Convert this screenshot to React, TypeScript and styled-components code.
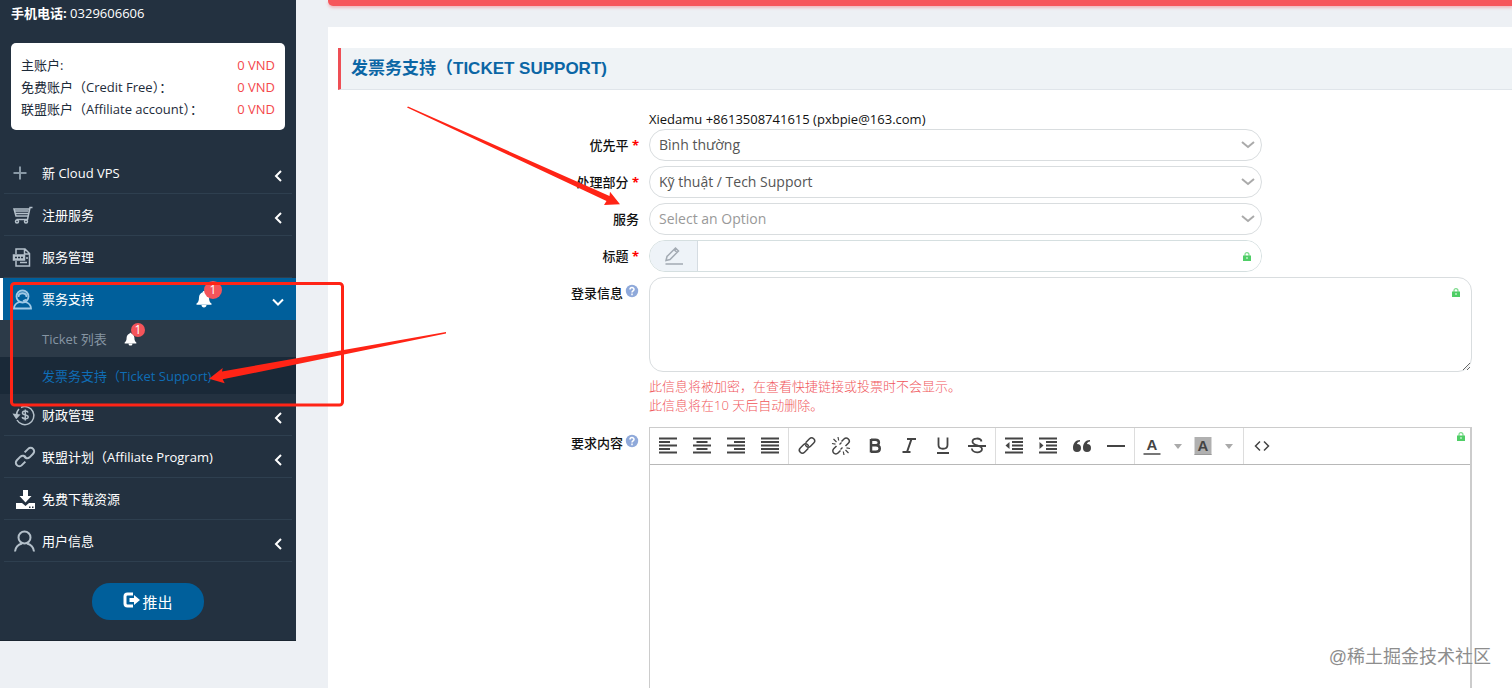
import React from "react";
import styled, { createGlobalStyle, css } from "styled-components";

const GlobalStyle = createGlobalStyle`
  *, *::before, *::after { box-sizing: border-box; }
  html, body { margin: 0; padding: 0; }
  body {
    background: #edf0f4;
    color: #111;
    font-family: "Open Sans", "Noto Sans CJK SC", sans-serif;
    font-size: 13px;
    line-height: 18px;
  }
  button, input, select, textarea { font: inherit; }
`;

const Page = styled.div`
  position: relative;
  display: flex;
  align-items: flex-start;
  min-height: 100vh;
  overflow: hidden;
`;

/* ---------- sidebar ---------- */

const Sidebar = styled.aside`
  flex: 0 0 296px;
  padding-bottom: 20px;
  background: #233140;
  border-bottom: 1px solid #1a2530;
  color: #fff;
`;

const Phone = styled.p`
  margin: 0;
  padding: 3px 11px 0;
  line-height: 20px;
`;

const Balances = styled.dl`
  margin: 20px 11px 22px;
  padding: 11px 10px 10px;
  border-radius: 5px;
  background: #fff;
  color: #1d2b3a;
  line-height: 22px;
`;

const BalanceRow = styled.div`
  display: flex;
  justify-content: space-between;
`;

const Amount = styled.dd`
  margin: 0;
  color: #f4474b;
`;

const Nav = styled.ul`
  margin: 0;
  padding: 0;
  list-style: none;
`;

const NavLink = styled.a<{ $active?: boolean }>`
  display: grid;
  grid-template-columns: 30px 1fr auto 20px;
  align-items: center;
  height: 42px;
  padding: 0 8px 0 12px;
  color: #fff;
  text-decoration: none;
  ${(p) =>
    p.$active
      ? css`
          padding-left: 9px;
          border-left: 3px solid #fff;
          background: #005f9b;
        `
      : css`
          background: linear-gradient(#2e3f4f, #2e3f4f) center bottom / calc(100% - 8px) 1px no-repeat;
        `}
`;

const Chevron = styled.svg`
  width: 14px;
  height: 14px;
  margin-top: 5px;
  justify-self: center;
  fill: none;
  stroke: #fff;
  stroke-width: 2;
`;

const SubLink = styled.a<{ $current?: boolean }>`
  display: flex;
  align-items: center;
  gap: 17px;
  height: 37px;
  padding-left: 42px;
  background: ${(p) => (p.$current ? "#1a2938" : "#2c3a48")};
  color: ${(p) => (p.$current ? "#0f6db5" : "#8695a3")};
  text-decoration: none;
`;

const Alert = styled.span<{ $large?: boolean }>`
  position: relative;
  display: flex;
  margin-right: ${(p) => (p.$large ? "56px" : "0")};
  svg { width: ${(p) => (p.$large ? "16px" : "13px")}; height: ${(p) => (p.$large ? "18px" : "14px")}; fill: #fff; }
`;

const Count = styled.span<{ $large?: boolean }>`
  position: absolute;
  left: ${(p) => (p.$large ? "8px" : "7px")};
  top: -9px;
  width: ${(p) => (p.$large ? "18px" : "14px")};
  height: ${(p) => (p.$large ? "18px" : "14px")};
  border-radius: 50%;
  background: #f4545a;
  color: #fff;
  font-size: 12px;
  line-height: ${(p) => (p.$large ? "18px" : "14px")};
  text-align: center;
`;

const MenuIcon = styled.svg`
  width: 24px;
  height: 24px;
  fill: none;
  stroke: #b4c0ca;
  stroke-width: 2;
`;

const Logout = styled.button`
  display: flex;
  align-items: center;
  justify-content: center;
  gap: 2px;
  width: 112px;
  height: 37px;
  margin: 21px auto 0;
  border: 0;
  border-radius: 18px;
  background: #005f9b;
  color: #fff;
  font-size: 15px;
  svg { width: 17px; height: 16px; margin-bottom: 4px; }
`;

/* ---------- main area ---------- */

const Main = styled.main`
  display: flex;
  flex: 1 1 0;
  flex-direction: column;
  min-width: 0;
  min-height: 100vh;
  padding-left: 32px;
`;

const NoticeBar = styled.div`
  height: 6px;
  margin-bottom: 21px;
  border-radius: 0 0 0 5px;
  background: #f6565b;
  box-shadow: 0 2px 3px rgba(246, 86, 91, 0.35);
`;

const Panel = styled.section`
  display: flex;
  flex: 1;
  flex-direction: column;
  padding: 21px 0 0 10px;
  background: #fff;
`;

const Title = styled.h1`
  margin: 0 0 20px;
  padding: 0 10px;
  border-bottom: 1px solid #e0e5ea;
  border-left: 3px solid #ee4f55;
  background: #eff3f6;
  color: #0b66a5;
  font-family: "Liberation Sans", "Noto Sans CJK SC", sans-serif;
  font-size: 17px;
  font-weight: 700;
  line-height: 41px;
`;

const Form = styled.form`
  display: flex;
  flex: 1;
  flex-direction: column;
  gap: 5px;
  padding-right: 40px;
`;

const Row = styled.div<{ $fill?: boolean }>`
  display: grid;
  grid-template-columns: 301px minmax(0, 1fr);
  column-gap: 10px;
  flex: ${(p) => (p.$fill ? "1" : "none")};
`;

const Customer = styled.p`
  grid-column: 2;
  margin: 0 0 -4px;
`;

const Label = styled.label`
  display: flex;
  justify-content: flex-end;
  padding-top: 7px;
  font-weight: 500;
  white-space: pre;
`;

const Required = styled.span`
  color: #f00;
  font-weight: 700;
`;

const Help = styled.svg`
  width: 14px;
  height: 14px;
  margin-left: 2px;
`;

const Field = styled.div<{ $wide?: boolean }>`
  position: relative;
  display: flex;
  flex-direction: column;
  width: 100%;
  max-width: ${(p) => (p.$wide ? "none" : "613px")};
`;

const Select = styled.select<{ $empty?: boolean }>`
  width: 100%;
  height: 32px;
  padding: 0 36px 0 9px;
  appearance: none;
  border: 1px solid #d9dddf;
  border-radius: 16px;
  background: #fff;
  color: ${(p) => (p.$empty ? "#999" : "#555")};
  font-size: 14px;
`;

const SelectArrow = styled.svg`
  position: absolute;
  top: 12px;
  right: 7px;
  width: 14px;
  height: 8px;
  fill: none;
  stroke: #aaa;
  stroke-width: 2;
  pointer-events: none;
`;

const InputGroup = styled.div`
  display: flex;
  height: 32px;
  overflow: hidden;
  border: 1px solid #d5dfe0;
  border-radius: 16px;
  background: #fff;
`;

const Addon = styled.span`
  display: flex;
  flex: 0 0 48px;
  align-items: center;
  justify-content: center;
  border-right: 1px solid #d5dce2;
  background: #eef3f8;
`;

const TextInput = styled.input`
  flex: 1;
  min-width: 0;
  padding: 0 32px 0 10px;
  border: 0;
  outline: 0;
`;

const Lock = styled.svg<{ $at: "input" | "area" | "editor" }>`
  position: absolute;
  top: ${(p) => ({ input: "12px", area: "11px", editor: "5px" })[p.$at]};
  right: ${(p) => ({ input: "11px", area: "12px", editor: "7px" })[p.$at]};
  width: 8px;
  height: 9px;
`;

const LoginInfo = styled.textarea`
  display: block;
  width: 100%;
  height: 95px;
  padding: 8px 32px 8px 10px;
  border: 1px solid #d9dddf;
  border-radius: 14px;
`;

const Hint = styled.p`
  margin: 5px 0 7px;
  color: #f0565b;
  font-weight: 300;
  line-height: 19px;
`;

const Editor = styled.div`
  display: flex;
  flex: 1;
  flex-direction: column;
  border: 1px solid #ccc;
  border-right-width: 2px;
  border-bottom: 0;
`;

const Toolbar = styled.div`
  display: flex;
  height: 37px;
  border-bottom: 1px solid #b8b8b8;
`;

const ToolGroup = styled.div<{ $colors?: boolean }>`
  display: flex;
  align-items: center;
  padding: ${(p) => (p.$colors ? "0 6px 0 0" : "0 1px")};
  border-right: 1px solid #ddd;
  &:last-child { border-right: 0; }
`;

const Tool = styled.button<{ $caret?: boolean }>`
  display: flex;
  align-items: center;
  justify-content: center;
  width: ${(p) => (p.$caret ? "17px" : "34px")};
  height: 36px;
  padding: 0;
  border: 0;
  background: none;
  color: #444;
  svg {
    width: ${(p) => (p.$caret ? "8px" : "20px")};
    height: ${(p) => (p.$caret ? "5px" : "20px")};
    fill: none;
    stroke: currentColor;
    stroke-width: 2;
  }
`;

const EditorBody = styled.textarea`
  flex: 1;
  min-height: 220px;
  padding: 10px;
  border: 0;
  outline: 0;
  resize: none;
`;

const Markup = styled.svg`
  position: absolute;
  top: 0;
  left: 0;
  width: 640px;
  height: 420px;
  pointer-events: none;
`;

const Watermark = styled.div`
  position: absolute;
  right: 21px;
  bottom: 18px;
  color: #8d8d8d;
  font-family: "Liberation Sans", "Noto Sans CJK SC", sans-serif;
  font-size: 18px;
  line-height: 26px;
  text-shadow: 0 0 1px #fff;
  pointer-events: none;
`;

/* ---------- drawings ---------- */

const icons: Record<string, React.ReactNode> = {
  plus: <path d="M8 5.500v13M1.500 12h13" stroke="#8898a5" />,
  cart: (
    <g strokeWidth="1.500">
      <path d="M20.500 4.500h-2.500l-2.500 12H4.500M17 6H2l2 7h12" />
      <path d="M3 8h13.500M4 10.500h12" />
      <circle cx="5" cy="18.500" r="1.500" />
      <circle cx="14" cy="18.500" r="1.500" />
    </g>
  ),
  file: (
    <g strokeWidth="1.500">
      <path d="M4 9V4h9l4.500 4.500V21H4v-5M12.500 4v5h5" />
      <path d="M1.500 10h11v5h-11z" fill="#b4c0ca" />
      <path d="M3 12.500h8" stroke="#233140" strokeDasharray="2 1" />
      <path d="M8 17.500h7M14 13h2" />
    </g>
  ),
  support: (
    <g stroke="#9fc9e6" strokeWidth="1.800">
      <circle cx="10.500" cy="9.500" r="6" />
      <path d="M6.500 10c0-5 8-5 8 0" />
      <path d="M14.500 12.500l-3.500 1.500" />
      <path d="M8 15c-4 1-6 3-6 6.500h17c0-3.500-2-5.500-6-6.500" />
    </g>
  ),
  money: (
    <g strokeWidth="1.500">
      <path d="M9 4.500A9 9 0 1 1 5 17M4.500 13a9 9 0 0 1 2.500-7" />
      <path d="M2 11.500 4.300 15l2.700-3z" fill="#b4c0ca" />
      <path d="M16 9.500c-.5-2-5.500-2-5.500.5 0 2.800 5.700 1.200 5.700 4 0 2.500-5.500 2.200-6 0M13.300 6.500v11" />
    </g>
  ),
  chain: (
    <g transform="translate(13 12) rotate(-45)">
      <path d="M-2 3.500h-5a3.500 3.500 0 0 1 0-7h5a3.500 3.500 0 0 1 3 5" transform="translate(-1 0)" />
      <path d="M2-3.500h5a3.500 3.500 0 0 1 0 7H2a3.500 3.500 0 0 1-3-5" transform="translate(1 0)" />
    </g>
  ),
  download: (
    <g fill="#fff" stroke="none">
      <path d="M11 3h5v6h3.500l-6 6.500-6-6.500H11z" />
      <path d="M4 16h6l3.500 3 3.500-3h6v6H4z" />
      <path d="M17 19.500h1.500V21H17zM20 19.500h1.500V21H20z" fill="#233140" />
    </g>
  ),
  user: (
    <g>
      <circle cx="12.500" cy="8.500" r="6" />
      <path d="M3 22.500c.5-4.500 3.500-7 7-8M22 22.500c-.5-4.500-3.500-7-7-8" />
    </g>
  ),
};

const Bell = () => (
  <svg viewBox="0 0 16 18" aria-hidden="true">
    <path d="M8 1c.8 0 1.300.5 1.300 1.300C11.500 3 13 5 13 7.500c0 3.500 1 5 2.500 6v1.200H.5v-1.200C2 12.500 3 11 3 7.500 3 5 4.500 3 6.700 2.300 6.700 1.500 7.200 1 8 1zM5.500 15h5c0 1.500-1 2.500-2.500 2.500S5.500 16.500 5.500 15z" />
  </svg>
);

const LockIcon = ({ at }: { at: "input" | "area" | "editor" }) => (
  <Lock $at={at} viewBox="0 0 8 9" aria-hidden="true">
    <path d="M2 4V2.700C2 1.300 2.800.6 4 .6s2 .7 2 2.100V4" fill="none" stroke="#7ddb8c" strokeWidth="1.200" />
    <path d="M0 3.500h8V9H0z" fill="#4fce66" />
    <path d="M3.400 5h1.200v2H3.400z" fill="#d8f7dd" />
  </Lock>
);

const HelpIcon = () => (
  <Help viewBox="0 0 14 14" aria-hidden="true">
    <circle cx="7" cy="7" r="6.200" fill="#8fa9da" />
    <path d="M5 5.500C5 3 9 3 9 5.400 9 6.800 7 6.900 7 8.500M7 9.600v1.600" fill="none" stroke="#fff" strokeWidth="1.500" />
  </Help>
);

const letter = { fill: "currentColor", stroke: "none", fontFamily: "Liberation Sans, sans-serif", fontWeight: 700 } as const;

const tools: Record<string, React.ReactNode> = {
  左对齐: <path d="M1 2.500h18M1 6h11M1 9.500h18M1 13h11M1 16.500h18" />,
  居中: <path d="M1 2.500h18M4.500 6h11M1 9.500h18M4.500 13h11M1 16.500h18" />,
  右对齐: <path d="M1 2.500h18M8 6h11M1 9.500h18M8 13h11M1 16.500h18" />,
  两端对齐: <path d="M1 2.500h18M1 6h18M1 9.500h18M1 13h18M1 16.500h18" />,
  链接: (
    <g strokeWidth="1.500" transform="translate(10 9.500) rotate(-45)">
      <path d="M-1 3h-5.500a3 3 0 0 1 0-6h4.500a3 3 0 0 1 3 3c0 .8-.2 1.300-.6 1.800" />
      <path d="M1-3h5.500a3 3 0 0 1 0 6H2a3 3 0 0 1-3-3c0-.8.200-1.300.6-1.800" />
    </g>
  ),
  取消链接: (
    <g strokeWidth="1.500">
      <path d="M10.500 5.500l2.500-2.500a3 3 0 0 1 4.300 4.300L14.500 10M9.500 14.500 7 17a3 3 0 0 1-4.300-4.300L5.500 10" />
      <path d="M8.500 8.500l2-2M11.500 11.500l-2 2M7 1l.7 3.500M2.500 3l3 3M1 7.500l3.500.7M13 19l-.7-3.500M17.500 17l-3-3M19 12.500l-3.500-.7" strokeWidth="1.200" />
    </g>
  ),
  粗体: <path d="M6 3v13.500M6 3.700h4.500c4.500 0 4.500 5.600 0 5.600H6h5c5 0 5 6.500 0 6.500H6" strokeWidth="2.500" />,
  斜体: <path d="M8 3h9M3.500 16h8M12.500 3l-4.500 13" strokeWidth="2" />,
  下划线: <path d="M5.500 1.500V9c0 5 9 5 9 0V1.500M4 17h12" strokeWidth="1.800" />,
  删除线: <path d="M14.500 5.500c-.7-4-9-4-9 .2 0 4.300 9.500 3 9.500 7.300 0 4.500-9.500 4.500-10.200-.5M1 10h18" strokeWidth="1.800" />,
  减少缩进: (
    <g>
      <path d="M1 2.500h18M8 6h11M8 9.500h11M8 13h11M1 16.500h18" />
      <path d="M5.500 6v7L1.500 9.500z" fill="currentColor" stroke="none" />
    </g>
  ),
  增加缩进: (
    <g>
      <path d="M1 2.500h18M8 6h11M8 9.500h11M8 13h11M1 16.500h18" />
      <path d="M1.500 6v7L5.500 9.500z" fill="currentColor" stroke="none" />
    </g>
  ),
  引用: (
    <g fill="currentColor" stroke="none">
      <path d="M8 4C3.500 4 1 7.500 1 12a4 4 0 1 0 4-4c0-1.200 1-2.200 3-2.500z" />
      <path d="M18 4c-4.500 0-7 3.500-7 8a4 4 0 1 0 4-4c0-1.200 1-2.200 3-2.500z" />
    </g>
  ),
  水平线: <path d="M1 10h18" />,
};

const textColor = (
  <g>
    <text x="10" y="14" textAnchor="middle" fontSize="15" {...letter}>A</text>
    <path d="M1.500 18h17" stroke="#777" />
  </g>
);

const backColor = (
  <g>
    <path d="M1.500 1h17v18h-17z" fill="#b0b0b0" stroke="none" />
    <text x="10" y="15" textAnchor="middle" fontSize="15" {...letter}>A</text>
    <path d="M1.500 18.500h17" stroke="#999" strokeWidth="1" />
  </g>
);

const codeView = <path d="M8 5.500L3.500 10 8 14.500M12 5.500l4.500 4.500-4.500 4.500" strokeWidth="1.500" />;

/* ---------- parts ---------- */

type Item = { icon: string; text: string; arrow?: boolean; active?: boolean };

const topItems: Item[] = [
  { icon: "plus", text: "新 Cloud VPS", arrow: true },
  { icon: "cart", text: "注册服务", arrow: true },
  { icon: "file", text: "服务管理" },
  { icon: "support", text: "票务支持", arrow: true, active: true },
];

const bottomItems: Item[] = [
  { icon: "money", text: "财政管理", arrow: true },
  { icon: "chain", text: "联盟计划（Affiliate Program)", arrow: true },
  { icon: "download", text: "免费下载资源" },
  { icon: "user", text: "用户信息", arrow: true },
];

const balances = ["主账户:", "免费账户（Credit Free）：", "联盟账户（Affiliate account）："];

const NavItem = ({ item }: { item: Item }) => (
  <li>
    <NavLink href="#" $active={item.active}>
      <MenuIcon viewBox="0 0 24 24" aria-hidden="true">{icons[item.icon]}</MenuIcon>
      <span>{item.text}</span>
      {item.active ? <Alert $large><Bell /><Count $large>1</Count></Alert> : <span />}
      {item.arrow && (
        <Chevron viewBox="0 0 14 14" aria-hidden="true">
          <path d={item.active ? "M2 4.500l5 5 5-5" : "M10 2L5 7l5 5"} />
        </Chevron>
      )}
    </NavLink>
  </li>
);

const ToolButton = ({ name }: { name: string }) => (
  <Tool type="button" aria-label={name}>
    <svg viewBox="0 0 20 20">{tools[name]}</svg>
  </Tool>
);

const CaretButton = ({ name }: { name: string }) => (
  <Tool type="button" $caret aria-label={name}>
    <svg viewBox="0 0 8 5"><path d="M0 0h8L4 5z" fill="#aaa" stroke="none" /></svg>
  </Tool>
);

const SelectRow = ({ id, label, value, required, empty }: { id: string; label: string; value: string; required?: boolean; empty?: boolean }) => (
  <Row>
    <Label htmlFor={id}>{label}{required && <Required> *</Required>}</Label>
    <Field>
      <Select id={id} $empty={empty}><option>{value}</option></Select>
      <SelectArrow viewBox="0 0 14 8" aria-hidden="true"><path d="M1 1l6 5 6-5" /></SelectArrow>
    </Field>
  </Row>
);

export default function App() {
  return (
    <>
      <GlobalStyle />
      <Page>
        <Sidebar>
          <Phone><strong>手机电话:</strong> 0329606606</Phone>
          <Balances>
            {balances.map((name) => (
              <BalanceRow key={name}><dt>{name}</dt><Amount>0 VND</Amount></BalanceRow>
            ))}
          </Balances>
          <nav>
            <Nav>
              {topItems.map((item) => <NavItem key={item.text} item={item} />)}
              <li>
                <SubLink href="#">Ticket 列表<Alert><Bell /><Count>1</Count></Alert></SubLink>
              </li>
              <li><SubLink href="#" $current>发票务支持（Ticket Support)</SubLink></li>
              {bottomItems.map((item) => <NavItem key={item.text} item={item} />)}
            </Nav>
          </nav>
          <Logout type="button">
            <svg viewBox="0 0 17 16" aria-hidden="true">
              <path d="M10 2H4.500A2.500 2.500 0 0 0 2 4.500v7A2.500 2.500 0 0 0 4.500 14H10" fill="none" stroke="#fff" strokeWidth="3" />
              <path d="M6.500 6H11V3l6 5-6 5v-3H6.500z" fill="#fff" />
            </svg>
            推出
          </Logout>
        </Sidebar>

        <Main>
          <NoticeBar />
          <Panel>
            <Title>发票务支持（TICKET SUPPORT)</Title>
            <Form>
              <Row><Customer>Xiedamu +8613508741615 (pxbpie@163.com)</Customer></Row>
              <SelectRow id="priority" label="优先平" value="Bình thường" required />
              <SelectRow id="department" label="处理部分" value="Kỹ thuật / Tech Support" required />
              <SelectRow id="service" label="服务" value="Select an Option" empty />
              <Row>
                <Label htmlFor="subject">标题<Required> *</Required></Label>
                <Field>
                  <InputGroup>
                    <Addon>
                      <svg width="20" height="20" viewBox="0 0 20 20" fill="none" stroke="#a3abb3" strokeWidth="1.500" aria-hidden="true">
                        <path d="M2 14.500l1-4L11.500 2l3 3L6 13.500zM10 3.500l3 3M1.500 18H19" />
                      </svg>
                    </Addon>
                    <TextInput id="subject" type="text" />
                  </InputGroup>
                  <LockIcon at="input" />
                </Field>
              </Row>
              <Row>
                <Label htmlFor="login-info">登录信息<HelpIcon /></Label>
                <Field $wide>
                  <LoginInfo id="login-info" />
                  <LockIcon at="area" />
                  <Hint>此信息将被加密，在查看快捷链接或投票时不会显示。<br />此信息将在10 天后自动删除。</Hint>
                </Field>
              </Row>
              <Row $fill>
                <Label htmlFor="content">要求内容<HelpIcon /></Label>
                <Field $wide>
                  <Editor>
                    <Toolbar role="toolbar">
                      <ToolGroup>
                        {["左对齐", "居中", "右对齐", "两端对齐"].map((n) => <ToolButton key={n} name={n} />)}
                      </ToolGroup>
                      <ToolGroup>
                        {["链接", "取消链接", "粗体", "斜体", "下划线", "删除线"].map((n) => <ToolButton key={n} name={n} />)}
                      </ToolGroup>
                      <ToolGroup>
                        {["减少缩进", "增加缩进", "引用", "水平线"].map((n) => <ToolButton key={n} name={n} />)}
                      </ToolGroup>
                      <ToolGroup $colors>
                        <Tool type="button" aria-label="文字颜色"><svg viewBox="0 0 20 20">{textColor}</svg></Tool>
                        <CaretButton name="选择文字颜色" />
                        <Tool type="button" aria-label="背景颜色"><svg viewBox="0 0 20 20">{backColor}</svg></Tool>
                        <CaretButton name="选择背景颜色" />
                      </ToolGroup>
                      <ToolGroup>
                        <Tool type="button" aria-label="源代码"><svg viewBox="0 0 20 20">{codeView}</svg></Tool>
                      </ToolGroup>
                    </Toolbar>
                    <EditorBody id="content" />
                  </Editor>
                  <LockIcon at="editor" />
                </Field>
              </Row>
            </Form>
          </Panel>
        </Main>

        <Markup viewBox="0 0 640 420" fill="#ff2416" aria-hidden="true">
          <rect x="11.500" y="283.500" width="331" height="121.500" rx="3" fill="none" stroke="#ff2416" strokeWidth="3" />
          <path d="M407 107.500L606.500 201l-2.500 4 16-.700-10-12.500-.5 4.200L408 106.500z" />
          <path d="M446 332L222 371.500l.700-3.500L209 378.700l15.700 4.600-2-4L446 333.500z" />
        </Markup>
        <Watermark>@稀土掘金技术社区</Watermark>
      </Page>
    </>
  );
}
